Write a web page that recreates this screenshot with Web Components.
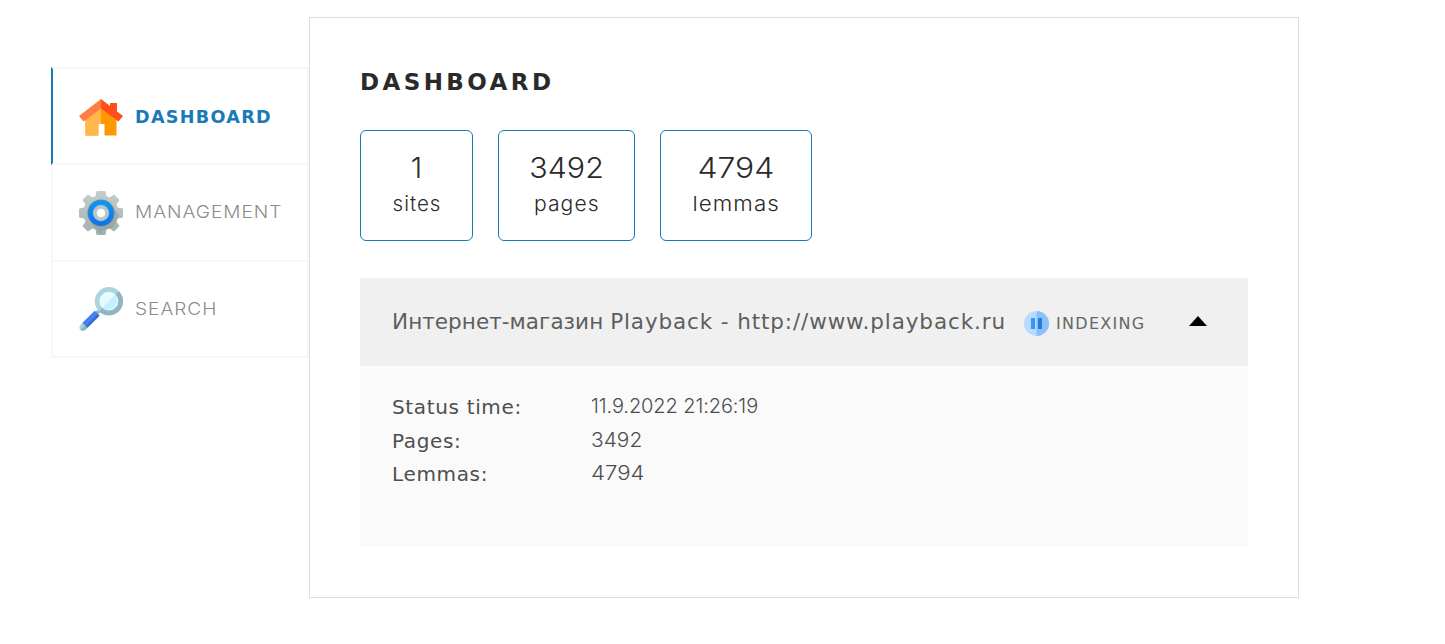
<!DOCTYPE html>
<html lang="en"><head><meta charset="utf-8"><title>Dashboard</title>
<style>html,body{margin:0;background:#fff}body{overflow:hidden}</style></head>
<body>
<search-app></search-app>
<script>
const define=(name,html)=>customElements.define(name,class extends HTMLElement{
  connectedCallback(){
    if(this.shadowRoot)return;
    const t=document.createElement('template');t.innerHTML=html;
    this.attachShadow({mode:'open'}).append(t.content.cloneNode(true));
  }
});

define('home-icon',`<style>:host{display:block;width:44px;height:44px}svg{display:block}</style>
<svg width="44" height="44" viewBox="0 0 44 44"><path d="M6.500 19 22 8l15.500 11v21.500H25.500V29h-6v11.500H6.500z" fill="#ff9800"/><path d="M6.500 19 22 8v21h-3v11.500H6.500z" fill="#ffb74d"/><path d="M31 8h7v10l-7-5z" fill="#ff4d1c"/><path d="M22 4 44 21l-4.500 5.500L22 13.500z" fill="#ff4f1c"/><path d="M22 4 0 21l4.500 5.500L22 13.500z" fill="#ff7c43"/></svg>`);

define('gear-icon',`<style>:host{display:block;width:44px;height:44px}svg{display:block}</style>
<svg width="44" height="44" viewBox="0 0 44 44"><defs><linearGradient id="g" gradientUnits="userSpaceOnUse" x1="0" y1="0" x2="0" y2="44"><stop stop-color="#c3cecd"/><stop offset="1" stop-color="#a0b1b0"/></linearGradient><linearGradient id="b" x1="0" y1="0" x2="0" y2="1"><stop stop-color="#0799fa"/><stop offset="1" stop-color="#0a72ee"/></linearGradient></defs>
<path fill="url(#g)" d="M18.500 0h7q1 0 1.200 1l.8 4.200 3.200 1.300 3.500-2.500q.8-.5 1.500.1l4.200 4.200q.7.700.1 1.500l-2.500 3.500 1.300 3.200 4.200.8q1 .2 1 1.200v7q0 1-1 1.200l-4.200.8-1.300 3.200 2.500 3.500q.6.800-.1 1.500l-4.200 4.200q-.7.600-1.500.1l-3.500-2.500-3.200 1.300-.8 4.200q-.2 1-1.200 1h-7q-1 0-1.200-1l-.8-4.200-3.200-1.300-3.500 2.500q-.8.500-1.500-.1l-4.200-4.200q-.7-.7-.1-1.500l2.500-3.500-1.300-3.200-4.200-.8q-1-.2-1-1.200v-7q0-1 1-1.200l4.200-.8 1.300-3.200-2.500-3.500q-.6-.8.1-1.500l4.200-4.200q.7-.6 1.500-.1l3.500 2.500 3.200-1.300.8-4.200q.2-1 1.200-1z"/>
<path d="m32 14 8 10-2 5-2 4-2 3-5 2-5 1-2 4-10-11z" fill="#758b8c" opacity=".35"/>
<circle cx="22" cy="22" r="13.600" fill="#708894"/><circle cx="22" cy="22" r="12.700" fill="url(#b)"/><circle cx="22" cy="22" r="8.300" fill="#a3b6c1"/><circle cx="22" cy="22" r="7.500" fill="#bbc6c6"/><circle cx="22" cy="22" r="4.300" fill="#fff"/></svg>`);

define('search-icon',`<style>:host{display:block;width:44px;height:44px}svg{display:block}</style>
<svg width="44" height="44" viewBox="0 0 44 44"><path d="m16 25 4-3 2 2-3 4z" fill="#9db8bf"/><path d="m3.200 36 12.500-12.300 2.600 2.600L6 38.800z" fill="#3f82f7"/><path d="m6 38.700 12.200-12.500 2.500 2.500L8.300 41z" fill="#376bd6"/><path d="M3.300 36 8 41q-2.500 4.300-6.700 2Q-1.300 39.500 3.300 36z" fill="#a8d3dc"/><path d="m5.800 38.500 2.500 2.300q-3 4.500-6.900 2.300z" fill="#8cb4be"/><circle cx="29.900" cy="14.200" r="14.100" fill="#abd5de"/><path d="M39.900 4.200a14.100 14.100 0 0 1-20 20z" fill="#91b5c0"/><circle cx="29.900" cy="14.200" r="9.400" fill="#e9faff"/><path d="M36.500 7.600a9.400 9.400 0 0 1-13.200 13.200z" fill="#c3f1fe"/></svg>`);

define('nav-item',`<style>
:host{display:flex;box-sizing:border-box;height:97px;align-items:center;gap:12px;padding:0 0 0 26px;border:2px solid #f7f7f7;border-top-width:0;font:300 17.700px Inter,sans-serif;letter-spacing:.9px;color:#8c8c8c;white-space:nowrap}
:host([first]){height:98px;border-top-width:2px}
:host([last]){height:96px;padding-bottom:1px}
:host([active]){border-left-color:#1a7ab8;color:#1a7ab8;font:bold 17.600px "DejaVu Sans",sans-serif;letter-spacing:1.300px}
span{padding-bottom:2px;transform:scaleX(1.080);transform-origin:0 50%}
:host([last]) span{padding-bottom:0}
:host([active]) span{padding:2px 0 0;transform:none}
:host([active]) ::slotted(home-icon){padding-top:1px}
</style><slot name="icon"></slot><span><slot></slot></span>`);

define('stat-card',`<style>
:host{display:flex;flex-direction:column;align-items:center;box-sizing:border-box;height:111px;border:1px solid #1a7ab3;border-radius:6px;padding-top:19px;color:#2a2a2a;font:300 20.500px Inter,sans-serif}
b{font-weight:300;font-size:29px;line-height:36px;transform:scaleX(var(--wide,1))}
span{line-height:36px;letter-spacing:1px;margin-right:-1px;transform:scaleX(var(--label,1))}
b span{letter-spacing:0;margin:0}
</style><b><slot name="value"></slot></b><span><slot></slot></span>`);

define('status-badge',`<style>:host{display:flex;align-items:center;gap:7px;color:#666;font:16px "DejaVu Sans",sans-serif;letter-spacing:1.300px;padding-top:2px}svg{display:block}</style>
<svg width="25" height="25" viewBox="0 0 25 25"><circle cx="12.500" cy="12.500" r="12.500" fill="#bbdaff"/><path d="M12.500 0a12.500 12.500 0 0 1 0 25z" fill="#8bc0ff"/><path d="M7 7h4v11H7z" fill="#3497fb"/><path d="M14 7h4v11h-4z" fill="#2b7bd0"/></svg><span><slot></slot></span>`);

define('detail-row',`<style>:host{display:grid;grid-template-columns:199px 1fr;height:33.600px;color:#4e4e4e}
dt,dd{margin:0}dt{font:20px/33.600px "DejaVu Sans",sans-serif;letter-spacing:.65px}dd{font:300 20px/31.600px Inter,sans-serif;letter-spacing:var(--ls,0);transform:scaleX(var(--wide,1));transform-origin:0 50%}</style>
<dt><slot name="key"></slot></dt><dd><slot></slot></dd>`);

define('site-panel',`<style>:host{display:block;background:#fafafa;height:269px}
header{display:flex;align-items:center;box-sizing:border-box;height:88px;background:#f0f0f0;padding:0 41.500px 0 32px}
h2{margin:0;padding-bottom:2px;font:21.500px "DejaVu Sans",sans-serif;letter-spacing:.8px;color:#5e5e5e;white-space:nowrap;width:632px}
i{margin:0 0 2px auto;border:9.500px solid transparent;border-width:0 9.500px 10px;border-bottom-color:#000}
dl{margin:0;padding:25px 32px}</style>
<header><h2><slot name="title"></slot></h2><slot name="status"></slot><i></i></header><dl><slot></slot></dl>`);

define('search-app',`<style>
:host{display:flex;box-sizing:border-box;height:644px;padding:17px 0 0 51px;align-items:flex-start}
nav{width:258px;margin-top:50px}
main{box-sizing:border-box;width:990px;height:581px;border:1px solid #ddd;padding:46px 50px}
h1{margin:0;font:bold 23px/36px "DejaVu Sans",sans-serif;letter-spacing:3.400px;color:#2a2a2a}
section{display:flex;gap:25px;margin:30px 0 37px}
.cyr{letter-spacing:.05px}.url{letter-spacing:.88px}
</style>
<nav>
<nav-item first active><home-icon slot="icon"></home-icon>DASHBOARD</nav-item>
<nav-item><gear-icon slot="icon"></gear-icon>MANAGEMENT</nav-item>
<nav-item last><search-icon slot="icon"></search-icon>SEARCH</nav-item>
</nav>
<main><h1>DASHBOARD</h1>
<section>
<stat-card style="width:113px"><span slot="value">1</span>sites</stat-card>
<stat-card style="width:137px;--wide:1.050;--label:1.030"><span slot="value">3492</span>pages</stat-card>
<stat-card style="width:152px;--wide:1.100;--label:1.090"><span slot="value">4794</span>lemmas</stat-card>
</section>
<site-panel><span slot="title"><span class="cyr">Интернет-магазин </span><span class="url">Playback - http://www.playback.ru</span></span><status-badge slot="status">INDEXING</status-badge>
<detail-row style="--ls:-.1px"><span slot="key">Status time:</span>11.9.2022 21:26:19</detail-row>
<detail-row style="--wide:1.045"><span slot="key">Pages:</span>3492</detail-row>
<detail-row style="--wide:1.110"><span slot="key">Lemmas:</span>4794</detail-row>
</site-panel></main>`);
</script>
</body></html>
